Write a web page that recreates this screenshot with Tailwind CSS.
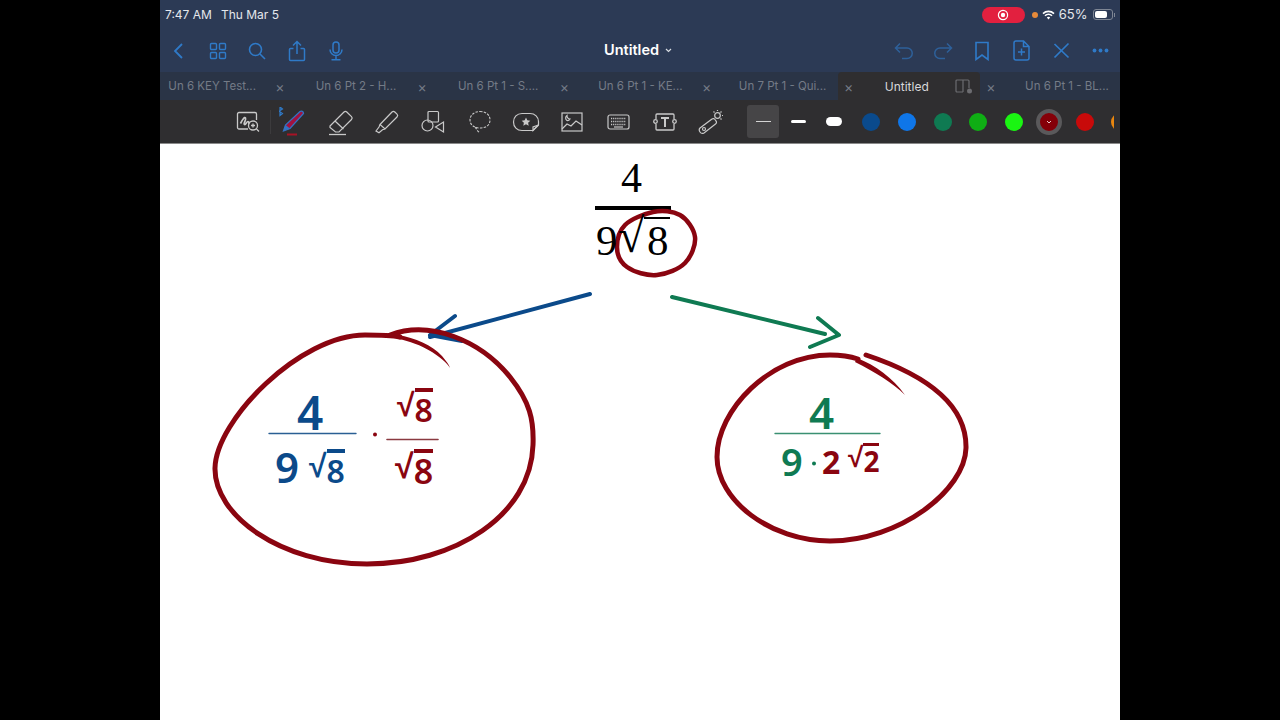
<!DOCTYPE html>
<html>
<head>
<meta charset="utf-8">
<script src="https://cdn.jsdelivr.net/npm/@tailwindcss/browser@4"></script>
</head>
<body class="bg-black font-['Inter',sans-serif]">
<div class="w-[1280px] h-[720px] bg-black overflow-hidden">
<div class="mx-auto w-[960px] h-[720px] flex flex-col overflow-hidden">

  <!-- status bar -->
  <div class="h-[29px] bg-[#2c3a55] flex items-center pl-[5px] pr-[5px] text-[12px] text-[#e4e7ec]">
    <span>7:47 AM</span><span class="ml-[9px]">Thu Mar 5</span>
    <div class="ml-auto flex items-center">
      <div class="w-[43px] h-[16px] rounded-full bg-[#e2203f] flex items-center justify-center">
        <svg width="12" height="12" viewBox="0 0 12 12"><circle cx="6" cy="6" r="4.6" fill="none" stroke="#fff" stroke-width="1.2"/><circle cx="6" cy="6" r="2.2" fill="#fff"/></svg>
      </div>
      <div class="ml-[7px] w-[6px] h-[6px] rounded-full bg-[#e68a3a]"></div>
      <svg class="ml-[4px]" width="13" height="10" viewBox="0 0 13 10"><path d="M1 3.6a8 8 0 0 1 11 0M3 5.8a5 5 0 0 1 7 0" fill="none" stroke="#fff" stroke-width="1.6"/><path d="M4.8 7.6a2.6 2.6 0 0 1 3.4 0L6.5 9.6z" fill="#fff"/></svg>
      <span class="ml-[4px] text-[13px]">65%</span>
      <div class="ml-[5px] w-[20px] h-[11px] rounded-[3px] border border-[#7e8694] p-[1px] flex"><div class="w-[12px] bg-white rounded-[2px]"></div></div>
      <div class="w-[1.5px] h-[4px] bg-[#7e8694] ml-[1px]"></div>
    </div>
  </div>

  <!-- nav bar -->
  <div class="h-[43px] bg-[#2c3a55] relative flex items-center">
    <div class="flex items-center text-[#2f7ac8] -ml-[1px]">
      <div class="w-[39.4px] flex justify-center">
        <svg width="22" height="22" viewBox="0 0 22 22" fill="none" stroke="currentColor" stroke-width="1.8"><path d="M14 4 7 11l7 7"/></svg>
      </div>
      <div class="w-[39.4px] flex justify-center">
        <svg width="18" height="18" viewBox="0 0 18 18" fill="none" stroke="currentColor" stroke-width="1.4"><rect x="1.5" y="1.5" width="6" height="6" rx="1"/><rect x="10.5" y="1.5" width="6" height="6" rx="1"/><rect x="1.5" y="10.5" width="6" height="6" rx="1"/><rect x="10.5" y="10.5" width="6" height="6" rx="1"/></svg>
      </div>
      <div class="w-[39.4px] flex justify-center">
        <svg width="18" height="18" viewBox="0 0 18 18" fill="none" stroke="currentColor" stroke-width="1.6"><circle cx="7.5" cy="7.5" r="6"/><path d="m12 12 5 5"/></svg>
      </div>
      <div class="w-[39.4px] flex justify-center">
        <svg width="18" height="22" viewBox="0 0 18 22" fill="none" stroke="currentColor" stroke-width="1.5"><path d="M9 14V2M5 5.5 9 1.5l4 4M5.5 8.5H2.5a1 1 0 0 0-1 1v10a1 1 0 0 0 1 1h13a1 1 0 0 0 1-1v-10a1 1 0 0 0-1-1h-3"/></svg>
      </div>
      <div class="w-[39.4px] flex justify-center">
        <svg width="14" height="20" viewBox="0 0 14 20" fill="none" stroke="currentColor" stroke-width="1.5"><rect x="4" y="1" width="6" height="11" rx="3"/><path d="M1 8.5a6 6 0 0 0 12 0M7 14.5V18M2.5 18.7h9"/></svg>
      </div>
    </div>
    <div class="absolute left-[444px] top-[12px] flex items-center text-white text-[14.5px] font-semibold leading-[18px]">Untitled<svg class="ml-[6px] mt-[1px]" width="7" height="5" viewBox="0 0 7 5" fill="none" stroke="#d8dce2" stroke-width="1.2"><path d="m1 1 2.5 2.5L6 1"/></svg></div>
    <div class="ml-auto flex items-center text-[#2f7ac8] pr-0">
      <div class="w-[39.3px] flex justify-center opacity-60 ml-[1px]">
        <svg width="20" height="18" viewBox="0 0 20 18" fill="none" stroke="currentColor" stroke-width="1.5"><path d="M6 1.5 1.5 6 6 10.500M1.500 6H13a5 5 0 0 1 0 10.500H8"/></svg>
      </div>
      <div class="w-[39.3px] flex justify-center opacity-60">
        <svg width="20" height="18" viewBox="0 0 20 18" fill="none" stroke="currentColor" stroke-width="1.5"><path d="M14 1.500 18.500 6 14 10.500M18.500 6H7a5 5 0 0 0 0 10.500h5"/></svg>
      </div>
      <div class="w-[39.3px] flex justify-center">
        <svg width="16" height="20" viewBox="0 0 16 20" fill="none" stroke="currentColor" stroke-width="1.6"><path d="M2 1.500h12V18.500l-6-4.500-6 4.500z"/></svg>
      </div>
      <div class="w-[39.3px] flex justify-center">
        <svg width="17" height="21" viewBox="0 0 17 21" fill="none" stroke="currentColor" stroke-width="1.5"><path d="M10.500 1h-7.500a2 2 0 0 0-2 2v15a2 2 0 0 0 2 2h11a2 2 0 0 0 2-2V6.500zM10.500 1v5.500H16M8.500 8.500v7M5 12h7"/></svg>
      </div>
      <div class="w-[39.3px] flex justify-center">
        <svg width="17" height="17" viewBox="0 0 17 17" fill="none" stroke="currentColor" stroke-width="1.7"><path d="M1.500 2 15.500 15.500M15.500 1.500 1.500 15.500"/></svg>
      </div>
      <div class="w-[39.3px] flex justify-center">
        <svg width="17" height="5" viewBox="0 0 17 5" fill="currentColor"><circle cx="2.500" cy="2.500" r="1.900"/><circle cx="8.500" cy="2.500" r="1.900"/><circle cx="14.500" cy="2.500" r="1.900"/></svg>
      </div>
    </div>
  </div>

  <!-- tabs -->
  <div class="h-[28px] bg-[#2a3446] flex items-center text-[11.5px] text-[#747b87] overflow-hidden">
    <div class="w-[109px] shrink-0 h-full flex items-center justify-end pr-[13px] pt-[2px]">Un 6 KEY Test...</div>
    <div class="w-[142.2px] shrink-0 h-full flex items-center"><span class="w-[22px] text-center text-[14px]">×</span><span class="w-[110px] ml-[10px] pt-[2px] text-center">Un 6 Pt 2 - H...</span></div>
    <div class="w-[142.2px] shrink-0 h-full flex items-center"><span class="w-[22px] text-center text-[14px]">×</span><span class="w-[110px] ml-[10px] pt-[2px] text-center">Un 6 Pt 1 - S....</span></div>
    <div class="w-[142.2px] shrink-0 h-full flex items-center"><span class="w-[22px] text-center text-[14px]">×</span><span class="w-[110px] ml-[10px] pt-[2px] text-center">Un 6 Pt 1 - KE...</span></div>
    <div class="w-[142.2px] shrink-0 h-full flex items-center"><span class="w-[22px] text-center text-[14px]">×</span><span class="w-[110px] ml-[10px] pt-[2px] text-center">Un 7 Pt 1 - Qui...</span></div>
    <div class="w-[142.2px] shrink-0 h-full flex items-center bg-[#2f2e30] rounded-t-[4px] relative"><span class="w-[22px] text-center text-[14px]">×</span><span class="w-[94px] pt-[2px] text-center text-[12px] text-[#d8d8da]">Untitled</span>
      <svg class="absolute left-[117px] top-[7px]" width="18" height="15" viewBox="0 0 18 15" fill="none" stroke="#6c6c70" stroke-width="1.200"><path d="M8 13H2a1 1 0 0 1-1-1V2a1 1 0 0 1 1-1h11a1 1 0 0 1 1 1v7M8 1v12"/><circle cx="14.500" cy="12" r="2.500" fill="#6c6c70" stroke="none"/></svg>
    </div>
    <div class="w-[142.2px] shrink-0 h-full flex items-center"><span class="w-[22px] text-center text-[14px]">×</span><span class="w-[110px] ml-[10px] pt-[2px] text-center">Un 6 Pt 1 - BL...</span></div>
  </div>

  <!-- toolbar -->
  <div class="h-[44px] bg-[#2f2e30] flex items-center pl-[65px] border-b border-[#8a8a8a] overflow-hidden relative shrink-0">
    <div class="flex items-center text-[#c9c9c9]">
      <div class="w-[46.3px] flex justify-center relative after:content-[''] after:absolute after:right-0 after:top-0 after:w-px after:h-[24px] after:bg-[#3c3b3d]">
        <svg width="24" height="24" viewBox="0 0 24 24" fill="none" stroke="currentColor" stroke-width="1.300"><path d="M12 19H3a1.500 1.500 0 0 1-1.500-1.500V4A1.500 1.500 0 0 1 3 2.500h16A1.500 1.500 0 0 1 20.500 4v6"/><path d="M4.500 13.500c2-4 4-7 5-5.500 1 1.500-2.500 6-1 6.500s2-3 3.500-3 0 2 1.500 2" stroke-width="1.700"/><circle cx="17" cy="15.500" r="4.500"/><path d="m20.500 19 2.500 2.500M15 15.500h4M17 13.500v4"/></svg>
      </div>
      <div class="w-[46.3px] flex justify-center relative">
        <svg width="30" height="30" viewBox="0 0 30 30"><path d="M4.500 24 6.500 18 21 4.500c1.500-1 3.500 0 3.500 2L11 21.500z" fill="#a3123f" stroke="#3372c2" stroke-width="1.300"/><path d="M4.500 24 6.500 18 11 21.500z" fill="#3372c2"/><path d="M8 27.500h10" stroke="#a81225" stroke-width="2"/><path d="m-1 2.500 4.500 3-2.500 2V-1l2.500 2-4.500 3" fill="none" stroke="#2f7ac8" stroke-width="1.200" transform="translate(0 1)"/></svg>
      </div>
      <div class="w-[46.3px] flex justify-center">
        <svg width="28" height="28" viewBox="0 0 28 28" fill="none" stroke="currentColor" stroke-width="1.200"><path d="m3 18 14-14a2 2 0 0 1 2.800 0l4.700 4.700a2 2 0 0 1 0 2.800L12 24H8.500L3 19.500zM8 13l8.500 8"/><path d="M2 26.500h17" stroke-width="1.300"/></svg>
      </div>
      <div class="w-[46.3px] flex justify-center">
        <svg width="26" height="26" viewBox="0 0 26 26" fill="none" stroke="currentColor" stroke-width="1.200"><path d="M6 15.500 18 3a2 2 0 0 1 2.800 0l2.200 2.200a2 2 0 0 1 0 2.800L11 20zM6 15.500 5 18l-3 4 3 1.800 3.500-3 2.500-.8"/></svg>
      </div>
      <div class="w-[46.3px] flex justify-center">
        <svg width="24" height="24" viewBox="0 0 24 24" fill="none" stroke="currentColor" stroke-width="1.200"><rect x="7" y="1.500" width="10.500" height="10.500" rx="1"/><circle cx="6.500" cy="15.500" r="5.500"/><path d="M22.500 12v10l-8-5z"/></svg>
      </div>
      <div class="w-[46.3px] flex justify-center">
        <svg width="22" height="24" viewBox="0 0 22 24" fill="none" stroke="currentColor" stroke-width="1.100" stroke-dasharray="2.500 1.300"><path d="M11 1.500c5.500 0 10 3 10 8.500s-4.500 8-10 8c-5.500 0-10-3-10-8s4.500-8.500 10-8.500zM6.500 17c.5 2 2 4 4 5.500"/></svg>
      </div>
      <div class="w-[46.3px] flex justify-center">
        <svg width="28" height="20" viewBox="0 0 28 20" fill="none" stroke="currentColor" stroke-width="1.200"><path d="M21 18.500H10c-5 0-8.500-3.500-8.500-8.500S5 1.500 10 1.500h8c5 0 8.500 3.500 8.500 8v3.500z"/><path d="m21 18.500 0-3.500 5.500-2z"/><path d="m14 5.500 1.300 2.800 3 .4-2.200 2 .6 3-2.700-1.500-2.700 1.500.6-3-2.200-2 3-.4z" fill="currentColor" stroke="none"/></svg>
      </div>
      <div class="w-[46.3px] flex justify-center">
        <svg width="22" height="20" viewBox="0 0 22 20" fill="none" stroke="currentColor" stroke-width="1.200"><rect x="1" y="1" width="20" height="18"/><path d="m1 17 5-5 4 2 5-5 6 4M6 3.500a3 3 0 0 0 0 5 3 3 0 0 0 3-1.500 3 3 0 0 1-3-3.500z"/></svg>
      </div>
      <div class="w-[46.3px] flex justify-center">
        <svg width="23" height="16" viewBox="0 0 23 16" fill="none" stroke="currentColor" stroke-width="1.200"><rect x="1" y="1" width="21" height="14" rx="2"/><path d="M4 4.500h15M4 7.500h15M4 10.500h15" stroke-width="1.600" stroke-dasharray="1.200 .9"/><path d="M7 13h9"/></svg>
      </div>
      <div class="w-[46.3px] flex justify-center">
        <svg width="24" height="20" viewBox="0 0 24 20" fill="none" stroke="currentColor" stroke-width="1.300"><path d="M3 7V3a1 1 0 0 1 1-1h16a1 1 0 0 1 1 1v4M3 12v5a1 1 0 0 0 1 1h16a1 1 0 0 0 1-1v-5"/><circle cx="2.500" cy="9.500" r="1.800"/><circle cx="21.500" cy="9.500" r="1.800"/><path d="M8 6h8M12 6v9" stroke-width="2"/></svg>
      </div>
      <div class="w-[46.3px] flex justify-center">
        <svg width="26" height="26" viewBox="0 0 26 26" fill="none" stroke="currentColor" stroke-width="1.200"><path d="m2 19 12-9a2 2 0 0 1 3 .5l1 1.500a2 2 0 0 1-.500 3L6 24c-1.500.800-3 .500-4-1s-1-3 0-4z"/><circle cx="6" cy="20" r="1.500"/><circle cx="19.500" cy="6.500" r="2.800"/><path d="M19.500 1v1M25 6.500h-1M23.500 2.500l-1 1M23.500 10.500l-1-1M15.500 2.500l1 1"/></svg>
      </div>
    </div>
    <div class="w-px h-[26px] bg-[#3c3b3d] ml-[-1px]"></div>
    <div class="ml-[14px] w-[32px] h-[33px] rounded-[3px] bg-[#464547] flex items-center justify-center shrink-0"><div class="w-[15px] h-px bg-[#d4d4d4]"></div></div>
    <div class="w-[38px] flex justify-center shrink-0"><div class="w-[15px] h-[3.500px] bg-white rounded-full"></div></div>
    <div class="w-[34px] flex justify-center shrink-0"><div class="w-[16px] h-[9px] bg-white rounded-full"></div></div>
    <div class="flex items-center shrink-0 ml-[2px]">
      <div class="w-[36px] flex justify-center"><div class="w-[18px] h-[18px] rounded-full bg-[#0a4a8c]"></div></div>
      <div class="w-[35.500px] flex justify-center"><div class="w-[18px] h-[18px] rounded-full bg-[#0f76e8]"></div></div>
      <div class="w-[35.500px] flex justify-center"><div class="w-[18px] h-[18px] rounded-full bg-[#0f7a52]"></div></div>
      <div class="w-[35.500px] flex justify-center"><div class="w-[18px] h-[18px] rounded-full bg-[#0fae14]"></div></div>
      <div class="w-[35.500px] flex justify-center"><div class="w-[18px] h-[18px] rounded-full bg-[#1af512]"></div></div>
      <div class="w-[35.500px] flex justify-center"><div class="w-[26px] h-[26px] rounded-full bg-[#850008] border-[4px] border-[#5a595b] flex items-center justify-center">
        <svg width="6" height="4" viewBox="0 0 6 4" fill="none" stroke="#e8c8c8" stroke-width="1"><path d="m1 1 2 2 2-2"/></svg></div></div>
      <div class="w-[35.500px] flex justify-center"><div class="w-[18px] h-[18px] rounded-full bg-[#c80a0a]"></div></div>
      <div class="w-[35.500px] flex justify-center"><div class="w-[18px] h-[18px] rounded-full bg-[#e8860f] shrink-0"></div></div>
    </div>
    <div class="absolute right-0 top-0 w-[6px] h-full bg-[#2f2e30]"></div>
  </div>

  <!-- canvas -->
  <div class="flex-1 bg-white relative overflow-hidden">
    <svg class="absolute inset-0" width="960" height="576" viewBox="160 144 960 576" fill="none" stroke-linecap="round" stroke-linejoin="round">
      <rect x="595" y="206" width="76" height="4" fill="#000"/>
      <path d="M653 212C662 210 673 211 680 215C687 219 694 229 695 237C696 245 691 257 685 263C679 269 667 274 657 275C647 276 634 272 627 267C620 262 617 254 617 247C617 240 619 231 625 225C631 219 644 214 653 212Z" stroke="#8a0510" stroke-width="4.500"/>
      <path d="M590 294 430 337M455 316 430 335 462 341" stroke="#0b4a8a" stroke-width="4"/>
      <path d="M672 297 825 334M818 318 839 335 810 347" stroke="#0f7a52" stroke-width="4"/>
      <path d="M390 335C430 320 480 340 510 377C530 402 534 420 533 445C531 515 455 564 367 564C280 564 214 515 215 468C216 420 300 335 365 335C378 335 390 335 400 337" stroke="#8a0510" stroke-width="5"/>
      <path d="M398 335C415 338 432 345 442 356C446 361 449 364 450 368C447 363 440 357 432 352C420 345 410 341 398 339Z" fill="#8a0510"/>
      <path d="M866 355C905 368 967 395 966 448C965 490 900 541 830 541C770 541 717 500 717 457C717 410 770 355 830 355C845 355 852 357 858 359" stroke="#8a0510" stroke-width="5"/>
      <path d="M857 358C875 365 893 378 905 395C893 383 875 372 855 362Z" fill="#8a0510"/>
      <path d="M269 433.500H356" stroke="#2a5f94" stroke-width="1.400"/>
      <path d="M387 439.500H438" stroke="#8a3a40" stroke-width="1.600"/>
      <circle cx="375" cy="434.500" r="2" fill="#8a0510"/>
      <path d="M775 433.500H880" stroke="#3a9072" stroke-width="1.400"/>
      <circle cx="814" cy="463.500" r="2" fill="#0f7a52"/>
    </svg>

    <!-- typeset -->
    <span class="absolute left-[461px] top-[9px] font-['Liberation_Serif',serif] text-[42px] leading-[50px] text-black">4</span>
    <span class="absolute left-[436px] top-[72px] font-['Liberation_Serif',serif] text-[43px] leading-[50px] text-black">9</span>
    <span class="absolute left-[458px] top-[67px] font-['Liberation_Serif',serif] text-[48px] leading-[50px] text-black">√</span>
    <span class="absolute left-[484px] top-[73px] w-[26px] pl-[3px] font-['Liberation_Serif',serif] text-[43px] leading-[44px] text-black border-t-[2px] border-black">8</span>

    <!-- handwritten, left -->
    <span class="absolute left-[137px] top-[243px] text-[46px] leading-[50px] font-['Noto_Sans',sans-serif] font-semibold text-[#0b4a8a]">4</span>
    <span class="absolute left-[115px] top-[298px] text-[42px] leading-[50px] font-['Noto_Sans',sans-serif] font-semibold text-[#0b4a8a]">9</span>
    <div class="absolute left-[149px] top-[297px] flex items-start text-[#0b4a8a]">
      <span class="text-[32px] leading-[50px] font-['Liberation_Sans',sans-serif] font-bold">√</span>
      <span class="mt-[8px] text-[32px] leading-[36px] font-['Noto_Sans',sans-serif] font-semibold border-t-[4px] border-[#0b4a8a]">8</span>
    </div>
    <div class="absolute left-[237px] top-[236px] flex items-start text-[#8a0510]">
      <span class="text-[32px] leading-[50px] font-['Liberation_Sans',sans-serif] font-bold">√</span>
      <span class="mt-[8px] text-[32px] leading-[36px] font-['Noto_Sans',sans-serif] font-semibold border-t-[4px] border-[#8a0510]">8</span>
    </div>
    <div class="absolute left-[235px] top-[297px] flex items-start text-[#8a0510]">
      <span class="text-[34px] leading-[50px] font-['Liberation_Sans',sans-serif] font-bold">√</span>
      <span class="mt-[8px] text-[34px] leading-[36px] font-['Noto_Sans',sans-serif] font-semibold border-t-[4px] border-[#8a0510]">8</span>
    </div>

    <!-- handwritten, right -->
    <span class="absolute left-[649px] top-[243px] text-[44px] leading-[50px] font-['Noto_Sans',sans-serif] font-semibold text-[#0f7a52]">4</span>
    <span class="absolute left-[621px] top-[292px] text-[38px] leading-[50px] font-['Noto_Sans',sans-serif] font-semibold text-[#0f7a52]">9</span>
    <span class="absolute left-[662px] top-[293px] text-[32px] leading-[50px] font-['Noto_Sans',sans-serif] font-bold text-[#8a0510]">2</span>
    <div class="absolute left-[688px] top-[292px] flex items-start text-[#8a0510]">
      <span class="text-[28px] leading-[44px] font-['Liberation_Sans',sans-serif] font-bold">√</span>
      <span class="mt-[7px] text-[28px] leading-[30px] font-['Noto_Sans',sans-serif] font-bold border-t-[3px] border-[#8a0510]">2</span>
    </div>
  </div>
</div>
</div>
</body>
</html>
